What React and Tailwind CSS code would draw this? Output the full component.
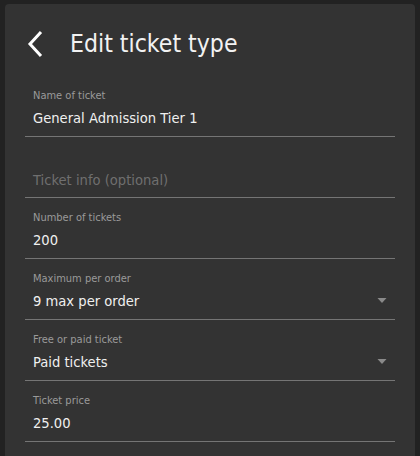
function Field({ label, value, select }) {
  return (
    <div className="flex flex-col border-b border-[#757575] pt-[13px] pb-[8px]">
      <span className="px-2 text-[11px] leading-[14px] text-[#9a9a9a]">{label}</span>
      <div className="mt-[5px] flex items-center justify-between px-2">
        <span className="text-[14.6px] leading-[20px] text-[#f0f0f0]">{value}</span>
        {select && (
          <svg width="10" height="6" viewBox="0 0 10 6">
            <path d="M0.5 0h9L5 5z" fill="#8a8a8a" />
          </svg>
        )}
      </div>
    </div>
  );
}

export default function App() {
  return (
    <div
      className="min-h-screen bg-[#222222] px-[5px] pt-[4px]"
      style={{ fontFamily: '"DejaVu Sans Condensed", "DejaVu Sans", sans-serif' }}
    >
      <div className="min-h-[452px] rounded-t-[4px] bg-[#333333] px-5">
        {/* header */}
        <div className="flex items-center pt-6 pb-4">
          <svg width="20" height="28" viewBox="0 0 20 28" className="ml-[1px]">
            <polyline points="15,2 4,14 15,26" fill="none" stroke="#ffffff" strokeWidth="3" />
          </svg>
          <h1 className="ml-[24px] text-[24.6px] leading-[32px] text-[#f2f2f2]">Edit ticket type</h1>
        </div>

        <Field label="Name of ticket" value="General Admission Tier 1" />
        <div className="border-b border-[#757575] px-2 pt-[33px] pb-[7px]">
          <div className="text-[14.6px] leading-[20px] text-[#6f6f6f]">Ticket info (optional)</div>
        </div>
        <Field label="Number of tickets" value="200" />
        <Field label="Maximum per order" value="9 max per order" select />
        <Field label="Free or paid ticket" value="Paid tickets" select />
        <Field label="Ticket price" value="25.00" />
      </div>
    </div>
  );
}
